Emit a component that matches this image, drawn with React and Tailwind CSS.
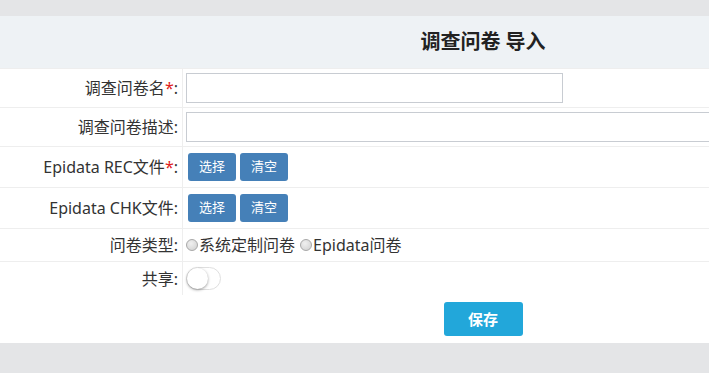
export default function App() {
  return (
    <div className="min-h-[373px] overflow-hidden bg-[#e4e5e7] pt-4 text-[#333]" style={{ fontFamily: '"Noto Sans", "Noto Sans CJK SC", sans-serif' }}>
      <div className="w-[966px] bg-white">
        <div className="flex h-[52px] items-center justify-center bg-[#eef2f5]">
          <h2 className="text-[20px] font-bold text-[#222]">调查问卷 导入</h2>
        </div>

        <Row h="h-[39px]" label="调查问卷名" required>
          <input className="h-[30px] w-[377px] border border-[#c8ccd2] bg-white px-2 outline-none" />
        </Row>
        <Row h="h-[39px]" label="调查问卷描述">
          <input className="h-[30px] w-[780px] border border-[#c8ccd2] bg-white px-2 outline-none" />
        </Row>
        <Row h="h-[41px]" label="Epidata REC文件" required>
          <FileButtons />
        </Row>
        <Row h="h-[41px]" label="Epidata CHK文件">
          <FileButtons />
        </Row>
        <Row h="h-[33px]" label="问卷类型">
          <label className="flex items-center">
            <Radio />
            <span>系统定制问卷</span>
          </label>
          <label className="ml-[5px] flex items-center">
            <Radio />
            <span>Epidata问卷</span>
          </label>
        </Row>
        <Row h="h-[34px]" label="共享">
          <div className="relative h-[23px] w-[35px] rounded-full border border-[#dfdfdf] bg-white">
            <div className="absolute left-0 top-0 h-[21px] w-[21px] rounded-full bg-white shadow-[0_1px_3px_rgba(0,0,0,0.4)]" />
          </div>
        </Row>

        <div className="flex h-[48px] items-center justify-center">
          <button className="h-[34px] w-[79px] rounded-[3px] bg-[#22a7da] text-[15px] font-bold text-white">保存</button>
        </div>
      </div>
    </div>
  );
}

function Row({ h, label, required, children }) {
  return (
    <div className={`flex border-t border-[#eeeeee] ${h}`}>
      <div className="flex w-[183px] shrink-0 items-center justify-end border-r border-[#eeeeee] pr-[4px] text-[16px]">
        {label}
        {required && <span className="text-[#e01b1b]">*</span>}
        <span>:</span>
      </div>
      <div className="flex flex-1 items-center pl-[3px] text-[16px]">{children}</div>
    </div>
  );
}

function FileButtons() {
  return (
    <div className="flex gap-[4px] pl-[2px]">
      <button className="h-[28px] w-[48px] rounded-[3px] bg-[#4580b8] text-[13px] text-white">选择</button>
      <button className="h-[28px] w-[48px] rounded-[3px] bg-[#4580b8] text-[13px] text-white">清空</button>
    </div>
  );
}

function Radio() {
  return (
    <span className="mr-[1px] inline-block h-[12px] w-[12px] rounded-full border border-[#a8a8a8] bg-[radial-gradient(circle_at_40%_35%,#f0f0f0,#cfcfcf)]" />
  );
}
